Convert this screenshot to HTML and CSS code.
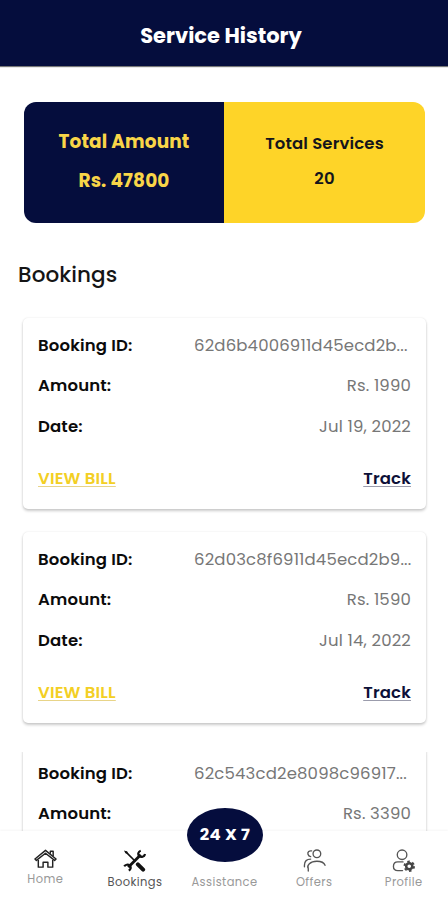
FILE: index.html
```html
<!DOCTYPE html>
<html lang="en">
<head>
<meta charset="utf-8">
<title>Service History</title>
<link rel="stylesheet" href="styles.css">
</head>
<body>
<div class="app">
  <header class="header"><h1 class="title">Service History</h1></header>
  <main class="content">
    <section class="summary">
      <div class="panel panel-amount"><span>Total Amount</span><span>Rs. 47800</span></div>
      <div class="panel panel-services"><span>Total Services</span><span>20</span></div>
    </section>
    <h2 class="heading">Bookings</h2>
    <section class="list">
      <article class="card">
        <div class="row"><b>Booking ID:</b><span class="id">62d6b4006911d45ecd2b...</span></div>
        <div class="row"><b>Amount:</b><span>Rs. 1990</span></div>
        <div class="row"><b>Date:</b><span>Jul 19, 2022</span></div>
        <div class="row links"><a class="bill">VIEW BILL</a><a class="track">Track</a></div>
      </article>
      <article class="card">
        <div class="row"><b>Booking ID:</b><span class="id">62d03c8f6911d45ecd2b9...</span></div>
        <div class="row"><b>Amount:</b><span>Rs. 1590</span></div>
        <div class="row"><b>Date:</b><span>Jul 14, 2022</span></div>
        <div class="row links"><a class="bill">VIEW BILL</a><a class="track">Track</a></div>
      </article>
      <article class="card card-cut">
        <div class="row"><b>Booking ID:</b><span class="id">62c543cd2e8098c96917...</span></div>
        <div class="row"><b>Amount:</b><span>Rs. 3390</span></div>
      </article>
    </section>
  </main>
  <nav class="nav">
    <a class="tab home">
      <svg class="icon" viewBox="0 0 24 24" fill="none" stroke="#222" stroke-width="1.5" stroke-linejoin="round"><path d="M1 12.500 12 3.500l11 9-1.500 1.500L12 6.500 2.500 14z"/><path d="M4.500 13.500V21H9.500v-5h5v5h5v-7.500M17 7V4.500h3v5"/></svg>
      <span>Home</span>
    </a>
    <a class="tab bookings">
      <svg class="icon" viewBox="0 0 24 24" fill="none" stroke="#111"><path d="M3 3 13 13" stroke-width="1.700"/><path d="M1 1.500 4.500 2.500 5 5 2.500 4.500z" fill="#111" stroke="none"/><path d="m15.500 16 5.500 5.500" stroke-width="4.200" stroke-linecap="round"/><path d="M5.500 19 18.500 6" stroke-width="3"/><path d="M18.500 1.800c-2.500.8-3.500 3.700-1.500 5.500s5.300.8 6-2M6 22.500c2.200-1.200 2.700-3.700 1-5.200s-4.500-1.100-5.700.8" stroke-width="2.300"/></svg>
      <span>Bookings</span>
    </a>
    <a class="tab assist"><strong class="bubble">24 X 7</strong><span>Assistance</span></a>
    <a class="tab offers">
      <svg class="icon" viewBox="0 0 24 24" fill="none" stroke="#555" stroke-width="1.400" stroke-linecap="round"><circle cx="14.500" cy="5" r="4"/><path d="M5.500 23v-2.500c-2-3.500 2-7.700 9-7.700 4.800 0 7.300 1 8.500 4.200M9 2C6.500 1.500 4.500 3.200 5.200 5.500c.4 1.400 1.500 2.300 2.800 2.500M8 10.500c-4 0-6.500 2-6.500 6.500v1.500"/></svg>
      <span>Offers</span>
    </a>
    <a class="tab profile">
      <svg class="icon" viewBox="0 0 24 24" fill="none" stroke="#555" stroke-width="1.400" stroke-linecap="round"><circle cx="10.500" cy="6" r="5"/><path d="M11 22.500H6c-3 0-4.500-1.500-4.500-4.300 0-2.900 1.600-4.700 4.500-4.700h5.500"/><circle cx="18" cy="18" r="3.200" stroke="#444" stroke-width="2.600"/><circle cx="18" cy="18" r="5" stroke="#444" stroke-width="2" stroke-dasharray="2.600 2.636" stroke-linecap="butt"/></svg>
      <span>Profile</span>
    </a>
  </nav>
</div>
</body>
</html>
```
FILE: styles.css
```css
* { box-sizing: border-box; }
body { margin: 0; background: #fff; font-family: Poppins, Inter, "Open Sans", sans-serif; }
.app { width: 448px; height: 900px; display: flex; flex-direction: column; overflow: hidden; }
.header { height: 66px; flex: none; background: #050d3d; box-shadow: 0 1px 1px #777; padding: 6px 6px 0 0; display: flex; align-items: center; justify-content: center; }
.title { margin: 0; font-size: 21px; line-height: 30px; font-weight: 700; color: #fff; }
.content { height: 765px; flex: none; overflow: hidden; padding: 36px 22px 0 23px; }
.summary { height: 121px; margin-left: 1px; width: 401px; display: flex; border-radius: 12px; overflow: hidden; }
.panel { display: flex; flex-direction: column; align-items: center; }
.panel-amount { width: 200px; background: #050d3d; color: #f9d548; font-size: 18.500px; font-weight: 700; line-height: 39px; padding-top: 20px; letter-spacing: .1px; }
.panel-services { flex: 1; background: #fed428; color: #14151c; font-size: 16.500px; font-weight: 600; line-height: 35px; padding-top: 23.500px; letter-spacing: .15px; }
.heading { margin: 36px 0 0 -5px; height: 31px; font-size: 21.500px; line-height: 31px; font-weight: 500; color: #151515; letter-spacing: .1px; }
.list { display: flex; flex-direction: column; gap: 23px; padding-top: 28px; }
.card { width: 403px; height: 191px; flex: none; border-radius: 5px; background: #fff; box-shadow: 0 0 2px rgba(0,0,0,.1), 0 2px 3px rgba(0,0,0,.2); padding: 7px 15px 0; }
.card-cut { clip-path: inset(6px -6px 0 -6px); }
.row { height: 40.500px; display: flex; align-items: center; justify-content: space-between; font-size: 16.500px; color: #777; letter-spacing: .17px; white-space: nowrap; }
.row b { font-weight: 600; color: #0b0b0b; }
.id { width: 217px; }
.links { margin-top: 12px; font-weight: 600; }
.links a { text-decoration: underline; text-decoration-thickness: 1px; text-underline-offset: 2px; }
.bill { color: #f3cf24; }
.track { color: #0d1038; }
.links .bill { text-decoration-color: #e8d488; }
.links .track { text-decoration-color: #9b9cac; }
.nav { height: 69px; flex: none; background: #fff; box-shadow: 0 -1px 2px rgba(0,0,0,.04); display: grid; grid-template-columns: repeat(5, 1fr); position: relative; }
.tab { display: flex; flex-direction: column; align-items: center; font-size: 11.500px; line-height: 16px; color: #999; letter-spacing: .4px; padding: 18px 0 0 1px; }
.icon { width: 23px; height: 23px; display: block; }
.tab span { margin-top: 2px; }
.home .icon { margin-top: -2px; }
.home span { margin-top: 1px; }
.bookings { color: #555; }
.bubble { width: 76px; height: 54px; margin: -41px 0 0 1px; border-radius: 50%; background: #050d3d; color: #fff; font-size: 16.500px; line-height: 53px; text-align: center; font-weight: 700; }
.assist .bubble + span { margin-top: 12px; }
```
